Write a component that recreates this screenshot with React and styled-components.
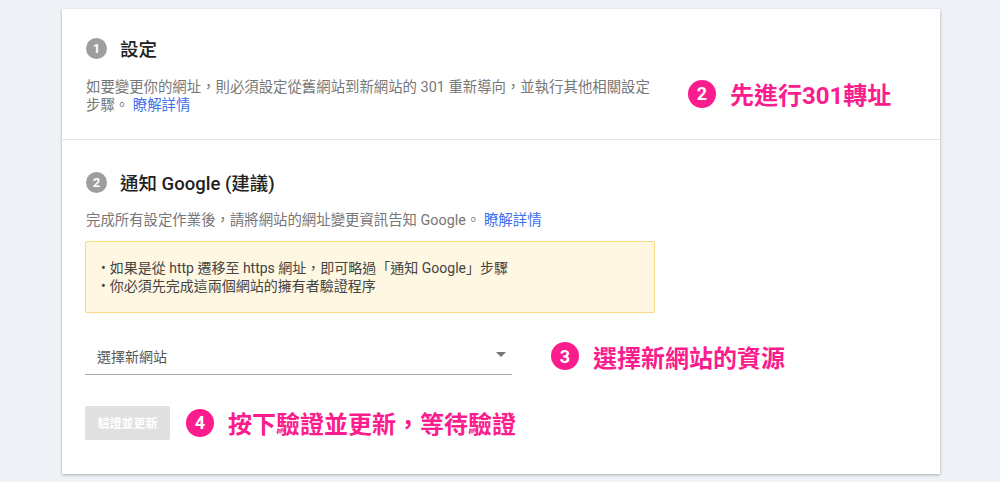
import React from 'react';
import styled, { createGlobalStyle } from 'styled-components';

const GlobalStyle = createGlobalStyle`
  body {
    margin: 0;
    background: #eef1f5;
    font-family: Roboto, "Noto Sans CJK TC", sans-serif;
  }
`;

const Page = styled.div`
  height: 482px;
  overflow: hidden;
  padding: 9px 0 0 62px;
  box-sizing: border-box;
`;

const Card = styled.div`
  width: 878px;
  background: #fff;
  box-shadow: 0 1px 3px rgba(0, 0, 0, 0.22), 0 1px 2px rgba(0, 0, 0, 0.08);
`;

const Section = styled.section`
  padding: ${({ pad }) => pad};
  border-bottom: ${({ divided }) => (divided ? '1px solid #e3e3e3' : 'none')};
`;

const StepHeader = styled.div`
  display: flex;
  align-items: center;
  height: 24px;
`;

const StepNum = styled.span`
  width: 21px;
  height: 21px;
  border-radius: 50%;
  background: #9e9e9e;
  color: #fff;
  font-size: 13px;
  font-weight: 700;
  display: flex;
  align-items: center;
  justify-content: center;
  margin-right: 13px;
`;

const StepTitle = styled.h2`
  margin: 0;
  font-size: 18.5px;
  font-weight: 500;
  color: #212121;
`;

const Row = styled.div`
  display: flex;
  align-items: ${({ align }) => align || 'center'};
  margin-top: ${({ top }) => top || 0}px;
`;

const Desc = styled.p`
  margin: 0;
  width: ${({ w }) => w || 'auto'};
  font-size: 14.4px;
  line-height: 18px;
  color: #777;
`;

const LearnMore = styled.a`
  color: #4170ef;
  text-decoration: none;
`;

const Notice = styled.ul`
  width: 570px;
  box-sizing: border-box;
  margin: 11px 0 0 -1px;
  padding: 17px 14px 17px 15px;
  list-style: none;
  background: #fef7e1;
  border: 1px solid #f8da85;
  border-radius: 2px;

  li {
    font-size: 14px;
    line-height: 18px;
    color: #444;
  }
  li::before {
    content: '•';
    margin-right: 4px;
  }
`;

const Select = styled.div`
  width: 427px;
  height: 38px;
  box-sizing: border-box;
  margin-left: -1px;
  padding: 0 6px 0 12px;
  display: flex;
  align-items: center;
  justify-content: space-between;
  border-bottom: 1px solid #a8a8a8;
  font-size: 14px;
  color: #555;
`;

const Caret = styled.span`
  width: 0;
  height: 0;
  border-left: 5px solid transparent;
  border-right: 5px solid transparent;
  border-top: 5px solid #757575;
  margin-top: -3px;
`;

const VerifyButton = styled.button`
  width: 85px;
  height: 34px;
  margin-left: -1px;
  border: none;
  border-radius: 2px;
  background: #e0e0e0;
  color: #fff;
  font-family: inherit;
  font-size: 12px;
  font-weight: 700;
  padding: 0;
`;

const Callout = styled.div`
  display: flex;
  align-items: center;
  margin-left: ${({ left }) => left}px;
  margin-top: ${({ top }) => top || 0}px;
  color: #fb1d8d;
  font-size: 24px;
  font-weight: 700;
  white-space: nowrap;
`;

const CalloutNum = styled.span`
  width: 28px;
  height: 28px;
  border-radius: 50%;
  background: #fb1d8d;
  color: #fff;
  font-family: Roboto, sans-serif;
  font-size: 18px;
  font-weight: 700;
  display: flex;
  align-items: center;
  justify-content: center;
  margin-right: 14px;
`;

const Note = ({ n, children, left, top }) => (
  <Callout left={left} top={top}>
    <CalloutNum>{n}</CalloutNum>
    {children}
  </Callout>
);

export default function App() {
  return (
    <>
      <GlobalStyle />
      <Page>
        <Card>
          <Section divided pad="27px 24px 24px">
            <StepHeader>
              <StepNum>1</StepNum>
              <StepTitle>設定</StepTitle>
            </StepHeader>
            <Row align="flex-start" top={19}>
              <Desc w="576px">
                如要變更你的網址，則必須設定從舊網站到新網站的 301 重新導向，並執行其他相關設定步驟。 <LearnMore href="#">瞭解詳情</LearnMore>
              </Desc>
              <Note n="2" left={26} top={-3}>先進行301轉址</Note>
            </Row>
          </Section>

          <Section pad="30px 24px 34px">
            <StepHeader>
              <StepNum>2</StepNum>
              <StepTitle>通知 Google (建議)</StepTitle>
            </StepHeader>
            <Row top={18}>
              <Desc>
                完成所有設定作業後，請將網站的網址變更資訊告知 Google。 <LearnMore href="#">瞭解詳情</LearnMore>
              </Desc>
            </Row>
            <Notice>
              <li>如果是從 http 遷移至 https 網址，即可略過「通知 Google」步驟</li>
              <li>你必須先完成這兩個網站的擁有者驗證程序</li>
            </Notice>
            <Row top={24}>
              <Select>
                選擇新網站
                <Caret />
              </Select>
              <Note n="3" left={39}>選擇新網站的資源</Note>
            </Row>
            <Row top={30}>
              <VerifyButton>驗證並更新</VerifyButton>
              <Note n="4" left={16}>按下驗證並更新，等待驗證</Note>
            </Row>
          </Section>
        </Card>
      </Page>
    </>
  );
}
